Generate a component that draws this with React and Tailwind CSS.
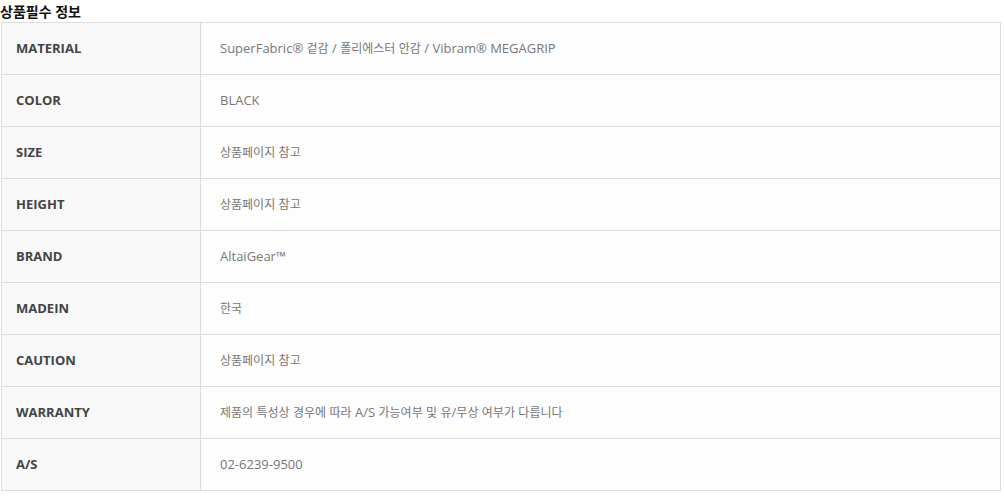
import React from 'react';

// 상품필수 정보 테이블
const rows = [
  { label: 'MATERIAL', value: 'SuperFabric® 겉감 / 폴리에스터 안감 / Vibram® MEGAGRIP' },
  { label: 'COLOR', value: 'BLACK' },
  { label: 'SIZE', value: '상품페이지 참고' },
  { label: 'HEIGHT', value: '상품페이지 참고' },
  { label: 'BRAND', value: 'AltaiGear™' },
  { label: 'MADEIN', value: '한국' },
  { label: 'CAUTION', value: '상품페이지 참고' },
  { label: 'WARRANTY', value: '제품의 특성상 경우에 따라 A/S 가능여부 및 유/무상 여부가 다릅니다' },
  { label: 'A/S', value: '02-6239-9500' },
];

// 한글 구간만 조금 작게 (원본 폰트 폭에 맞춤)
const Mixed = ({ text }) =>
  text.split(/([가-힣]+)/).map((part, i) =>
    /[가-힣]/.test(part) ? (
      <span key={i} className="text-[12px]">{part}</span>
    ) : (
      <span key={i}>{part}</span>
    )
  );

const App = () => {
  return (
    <div
      className="w-[1004px] h-[496px] bg-white"
      style={{ fontFamily: '"Open Sans", "Noto Sans CJK KR", sans-serif' }}
    >
      <h2 className="text-[14px] font-bold leading-[20px] text-[#111] pt-[2px]">상품필수 정보</h2>
      <div className="ml-[1px] w-[1000px] border-x border-t border-[#dcdcdc]">
        {rows.map((row) => (
          <div key={row.label} className="flex h-[52px] border-b border-[#dcdcdc]">
            <div className="w-[199px] shrink-0 flex items-center pl-[14px] bg-[#f8f8f8] border-r border-[#dcdcdc] text-[13px] font-bold text-[#444]">
              {row.label}
            </div>
            <div className="flex-1 flex items-center pl-[19px] bg-[#fdfdfd] text-[13px] text-[#777]">
              <span>
                <Mixed text={row.value} />
              </span>
            </div>
          </div>
        ))}
      </div>
    </div>
  );
};

export default App;
